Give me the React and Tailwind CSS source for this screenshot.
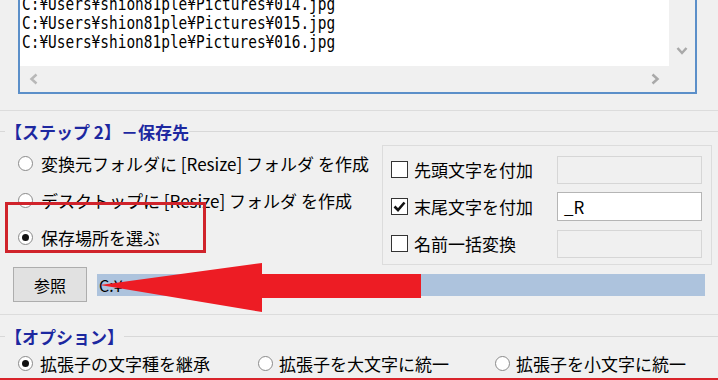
const FILES = ['014', '015', '016']

function Radio({ checked }) {
  return (
    <span className="relative flex h-[15px] w-[15px] shrink-0 items-center justify-center rounded-full border border-[#8a8a8a] bg-white">
      {checked && <span className="h-[7px] w-[7px] rounded-full bg-[#111]" />}
    </span>
  )
}

function Check({ checked }) {
  return (
    <span className="flex h-[17px] w-[17px] shrink-0 items-center justify-center border border-[#333] bg-white">
      {checked && (
        <svg width="13" height="13" viewBox="0 0 13 13">
          <path d="M1.5 6.5 L5 10 L11.5 2.5" fill="none" stroke="#111" strokeWidth="2.6" />
        </svg>
      )}
    </span>
  )
}

function RadioRow({ checked, label }) {
  return (
    <div className="flex h-[37px] items-center gap-[8px] pl-[18px]">
      <Radio checked={checked} />
      <span className="whitespace-nowrap">{label}</span>
    </div>
  )
}

function CheckRow({ checked, label, value, enabled }) {
  return (
    <div className="flex h-[37px] items-center pl-[8px] pr-[9px]">
      <Check checked={checked} />
      <span className="ml-[6px] flex-1 whitespace-nowrap">{label}</span>
      <div
        className={
          enabled
            ? 'flex h-[29px] w-[145px] items-center border border-[#b5b5b5] bg-white px-[6px]'
            : 'h-[28px] w-[145px] border border-[#d6d6d6] bg-[#f0f0f0]'
        }
      >
        {value}
      </div>
    </div>
  )
}

function GroupHeader({ children }) {
  return (
    <div className="flex h-[20px] items-center">
      <div className="h-px w-[5px] bg-[#d8d8d8]" />
      <span className="whitespace-nowrap font-bold text-[#1d28a0]">{children}</span>
      <div className="h-px flex-1 bg-[#d8d8d8]" />
    </div>
  )
}

export default function App() {
  return (
    <div className="relative h-[380px] w-[718px] overflow-hidden bg-[#f0f0f0] font-['Noto_Sans_CJK_JP',sans-serif] text-[17px] leading-none text-black">
      {/* file list box */}
      <div className="ml-[18px] mr-[21px] grid h-[94px] grid-cols-[1fr_26px] grid-rows-[1fr_26px] border-x-2 border-b-2 border-[#5b8fc9]">
        <div className="overflow-hidden bg-white pl-[2px]">
          <div className="-mt-[5px]">
            {FILES.map((f) => (
              <div
                key={f}
                className="h-[19px] origin-left scale-x-[0.85] whitespace-nowrap font-['DejaVu_Sans_Mono',monospace] text-[17px] leading-[19px]"
              >
                C:¥Users¥shion81ple¥Pictures¥{f}.jpg
              </div>
            ))}
          </div>
        </div>
        <div className="flex items-end justify-center pb-[10px]">
          <svg width="12" height="10" viewBox="0 0 12 10">
            <path d="M1.5 2 L6 7 L10.5 2" fill="none" stroke="#a9a9a9" strokeWidth="2.5" />
          </svg>
        </div>
        <div className="flex items-center justify-between px-[9px]">
          <svg width="10" height="12" viewBox="0 0 10 12">
            <path d="M7.5 1.5 L2.5 6 L7.5 10.5" fill="none" stroke="#b8b8b8" strokeWidth="2.5" />
          </svg>
          <svg width="10" height="12" viewBox="0 0 10 12">
            <path d="M2.5 1.5 L7.5 6 L2.5 10.5" fill="none" stroke="#a9a9a9" strokeWidth="2.5" />
          </svg>
        </div>
        <div />
      </div>

      <div className="mt-[16px] h-px bg-[#dcdcdc]" />

      {/* step 2 */}
      <div className="mt-[10px]">
        <GroupHeader>【ステップ 2】－保存先</GroupHeader>
      </div>
      <div className="flex">
        <div className="w-[382px] pt-[4px]">
          <RadioRow label="変換元フォルダに [Resize] フォルダ を作成" />
          <RadioRow label="デスクトップに [Resize] フォルダ を作成" />
          <RadioRow checked label="保存場所を選ぶ" />
        </div>
        <div className="mt-[4px] h-[120px] w-[330px] border border-[#dcdcdc] pt-[5px]">
          <CheckRow label="先頭文字を付加" />
          <CheckRow checked enabled label="末尾文字を付加" value="_R" />
          <CheckRow label="名前一括変換" />
        </div>
      </div>

      <div className="mt-[2px] flex items-center pl-[13px] pr-[13px]">
        <button className="h-[35px] w-[74px] border border-[#adadad] bg-[#e1e1e1] text-[16px]">参照</button>
        <div className="ml-[10px] flex h-[22px] flex-1 items-center bg-[#adc3dd] pl-[2px] text-[16px]">C:¥</div>
      </div>

      <div className="mt-[12px] h-px bg-[#dcdcdc]" />

      {/* options */}
      <div className="mt-[11px]">
        <GroupHeader>【オプション】</GroupHeader>
      </div>
      <div className="mt-[9px] flex items-center pl-[18px]">
        <Radio checked />
        <span className="ml-[7px] w-[218px] whitespace-nowrap">拡張子の文字種を継承</span>
        <Radio />
        <span className="ml-[6px] w-[216px] whitespace-nowrap">拡張子を大文字に統一</span>
        <Radio />
        <span className="ml-[6px] whitespace-nowrap">拡張子を小文字に統一</span>
      </div>

      {/* annotations */}
      <div className="absolute left-[5px] top-[202px] h-[51px] w-[201px] border-[3px] border-[#d0232b]" />
      <svg className="absolute left-0 top-0" width="718" height="380" viewBox="0 0 718 380">
        <polygon points="100,285 262,263 262,274 421,274 421,298 262,298 262,312" fill="#ed1c24" />
      </svg>
      <div className="absolute bottom-0 left-0 right-0 h-[2px] bg-[#d9242b]" />
    </div>
  )
}
